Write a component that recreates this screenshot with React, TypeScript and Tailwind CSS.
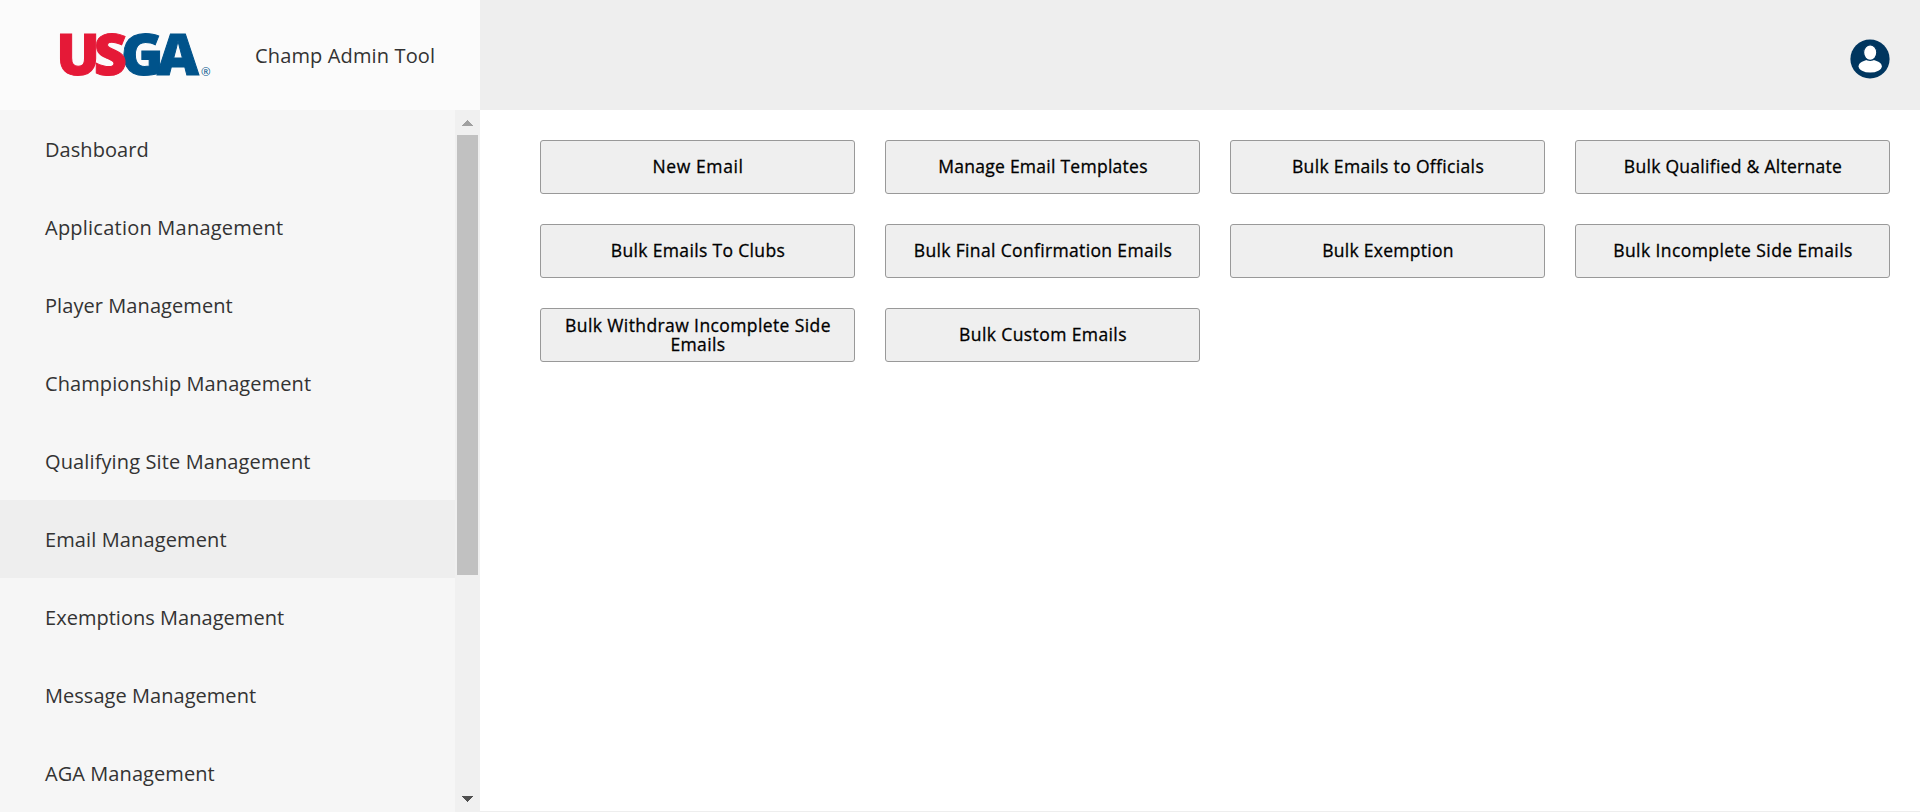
type Item = { label: string; spacing: string };

const menu: Item[] = [
  { label: "Dashboard", spacing: "tracking-[0.07px]" },
  { label: "Application Management", spacing: "tracking-[0.23px]" },
  { label: "Player Management", spacing: "tracking-[0.07px]" },
  { label: "Championship Management", spacing: "tracking-[0.09px]" },
  { label: "Qualifying Site Management", spacing: "tracking-[0.12px]" },
  { label: "Email Management", spacing: "tracking-[0.12px]" },
  { label: "Exemptions Management", spacing: "tracking-[0.03px]" },
  { label: "Message Management", spacing: "tracking-[0.04px]" },
  { label: "AGA Management", spacing: "tracking-[0.07px]" },
];

const actions: Item[] = [
  { label: "New Email", spacing: "pb-[2px] tracking-[0.6px]" },
  { label: "Manage Email Templates", spacing: "pb-[2px] tracking-[0.26px]" },
  { label: "Bulk Emails to Officials", spacing: "pb-[2px] tracking-[0.34px]" },
  { label: "Bulk Qualified & Alternate", spacing: "pb-[2px] tracking-[0.28px]" },
  { label: "Bulk Emails To Clubs", spacing: "pb-[2px] tracking-[0.34px]" },
  { label: "Bulk Final Confirmation Emails", spacing: "pb-[2px] tracking-[0.35px]" },
  { label: "Bulk Exemption", spacing: "pb-[2px] tracking-[0.27px]" },
  { label: "Bulk Incomplete Side Emails", spacing: "pb-[2px] tracking-[0.41px]" },
  { label: "Bulk Withdraw Incomplete Side Emails", spacing: "tracking-[0.4px]" },
  { label: "Bulk Custom Emails", spacing: "pb-[2px] tracking-[0.4px]" },
];

function Logo() {
  return (
    <svg width="162" height="90" viewBox="56 10 162 90" className="block shrink-0 font-['Open_Sans',sans-serif] font-extrabold" role="img" aria-label="USGA">
      <g fontSize="56.5" strokeWidth="1">
        <g fill="#00538b" stroke="#00538b">
          <text x="121" y="75.1" textLength="42.5" lengthAdjust="spacingAndGlyphs">G</text>
          <text x="157" y="75.1" textLength="42" lengthAdjust="spacingAndGlyphs">A</text>
        </g>
        <g fill="#e51937" stroke="#e51937">
          <text x="56.3" y="75.1" textLength="43.6" lengthAdjust="spacingAndGlyphs">U</text>
          <text x="93.7" y="75.1" textLength="33.2" lengthAdjust="spacingAndGlyphs">S</text>
        </g>
      </g>
      <text x="201" y="76" fontSize="11.5" fontWeight="500" fill="#00538b">®</text>
    </svg>
  );
}

function Avatar() {
  return (
    <svg width="40" height="40" viewBox="0 0 40 40" className="block">
      <circle cx="20" cy="20" r="19.6" fill="#00365f" />
      <ellipse cx="20.2" cy="27.2" rx="11.6" ry="6.4" fill="#fff" />
      <ellipse cx="20.2" cy="13.6" rx="6.6" ry="7.8" fill="#fff" stroke="#00365f" strokeWidth="1.2" />
    </svg>
  );
}

export default function App() {
  return (
    <div className="flex h-[812px] w-full flex-col overflow-hidden bg-white font-['Open_Sans','Noto_Sans',sans-serif]">
      <header className="flex h-[110px] shrink-0 bg-[#eee]">
        <div className="flex w-[480px] shrink-0 items-center bg-[#fbfbfb] pl-14">
          <Logo />
          <h1 className="ml-[37px] pt-[2px] text-[20px] leading-[30px] tracking-[0.14px] text-[#333]">Champ Admin Tool</h1>
        </div>
        <div className="flex flex-1 items-center justify-end pt-[7px] pr-[30px]">
          <Avatar />
        </div>
      </header>
      <div className="flex min-h-0 flex-1">
        <aside className="flex w-[480px] shrink-0 bg-[#f6f6f6]">
          <nav className="min-w-0 flex-1 overflow-hidden">
            {menu.map((item) => (
              <a
                key={item.label}
                className={`flex h-[78px] items-center pt-[2px] pl-[45px] text-[20px] whitespace-nowrap text-[#333] ${item.spacing} ${item.label === "Email Management" ? "bg-[#eee]" : ""}`}
              >
                {item.label}
              </a>
            ))}
          </nav>
          <div className="flex w-[25px] flex-col items-center bg-[#f0f0f0]">
            <svg width="25" height="25" className="block shrink-0" shapeRendering="crispEdges">
              <path d="M7 16h11L12.5 10z" fill="#a0a0a0" />
            </svg>
            <div className="mr-px h-[440px] w-[21px] bg-[#c1c1c1]" />
            <svg width="25" height="25" className="mt-auto block shrink-0" shapeRendering="crispEdges">
              <path d="M7 9h11l-5.500 6z" fill="#505050" />
            </svg>
          </div>
        </aside>
        <main className="flex-1 border-b border-[#eee] pt-[30px] pr-[30px] pl-[60px]">
          <div className="grid grid-cols-4 gap-[30px]">
            {actions.map((item) => (
              <button
                key={item.label}
                className={`flex h-[54px] items-center justify-center rounded-[3px] border border-[#999] bg-[#efefef] pr-5 pl-[21px] text-center text-[17.5px] leading-[19px] text-black [-webkit-text-stroke:0.3px_#000] ${item.spacing}`}
              >
                {item.label}
              </button>
            ))}
          </div>
        </main>
      </div>
    </div>
  );
}
